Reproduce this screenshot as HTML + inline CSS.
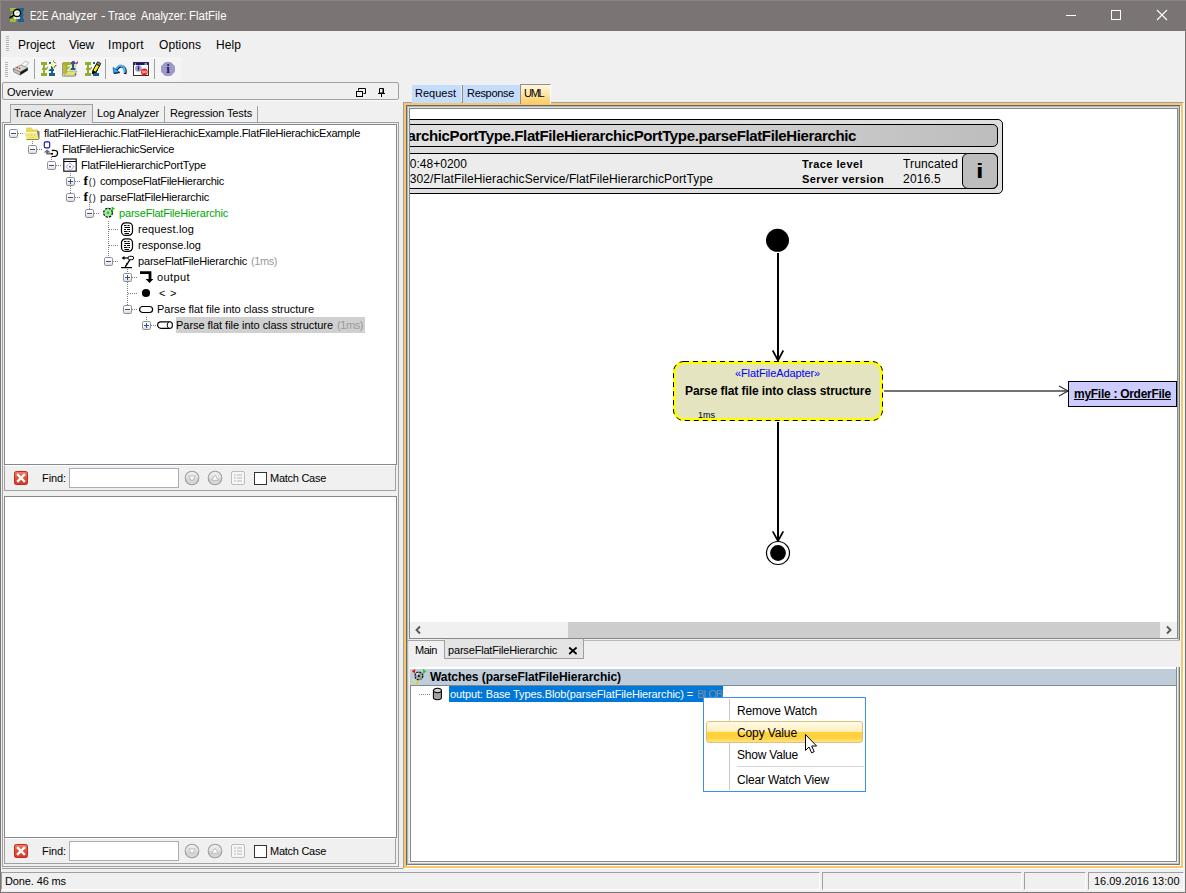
<!DOCTYPE html>
<html><head><meta charset="utf-8"><title>E2E Analyzer - Trace Analyzer: FlatFile</title><style>
*{margin:0;padding:0;box-sizing:border-box}
html,body{width:1186px;height:893px;overflow:hidden;background:#f0f0f0;font-family:"Liberation Sans",sans-serif;}
#root{position:relative;width:1186px;height:893px;overflow:hidden;background:#f0f0f0}
.b{position:absolute;display:block}
.t{position:absolute;white-space:pre;display:block}
</style></head><body><div id="root">
<div class="b" style="left:0px;top:0px;width:1186px;height:31px;background:#7a7574"></div>
<div class="b" style="left:0px;top:31px;width:1px;height:862px;background:#7a7574"></div>
<div class="b" style="left:1185px;top:31px;width:1px;height:862px;background:#7a7574"></div>
<div class="b" style="left:0px;top:892px;width:1186px;height:1px;background:#7a7574"></div>
<div class="b" style="left:0px;top:0px;width:1186px;height:1px;background:#8b8685"></div>
<div class="b" style="left:0px;top:0px;width:1px;height:31px;background:#8b8685"></div>
<svg class="b" style="left:9px;top:7px;" width="16" height="16" viewBox="0 0 16 16">
<rect x="1" y="1" width="6" height="3" fill="#9cc032"/><rect x="4" y="4" width="3" height="8" fill="#9cc032"/><rect x="1" y="12" width="6" height="3" fill="#9cc032"/><rect x="2" y="7" width="3" height="2" fill="#9cc032"/>
<rect x="9" y="1" width="6" height="3" fill="#1c6490"/><rect x="11" y="4" width="3" height="8" fill="#1c6490"/><rect x="9" y="12" width="6" height="3" fill="#1c6490"/><rect x="12" y="7" width="2.500" height="2" fill="#1c6490"/>
<rect x="5.200" y="10" width="5.600" height="1.800" fill="#fff"/>
<circle cx="8" cy="6" r="3.500" fill="#fff" stroke="#000" stroke-width="1.300"/>
<path d="M6.800 6.800 Q8.500 4.500 9.500 5.500" fill="none" stroke="#9cc032" stroke-width="1"/>
<path d="M5 8.200 L0.500 10.900" stroke="#000" stroke-width="1.400"/>
</svg>
<span class="t" style="left:30px;top:8px;font-size:12px;line-height:16px;color:#fff;transform:scaleX(0.8154);transform-origin:0 0;">E2E</span>
<span class="t" style="left:50.5px;top:8px;font-size:12px;line-height:16px;color:#fff;transform:scaleX(0.9853);transform-origin:0 0;">Analyzer</span>
<span class="t" style="left:100.5px;top:8px;font-size:12px;line-height:16px;color:#fff;transform:scaleX(1.1250);transform-origin:0 0;">-</span>
<span class="t" style="left:107.5px;top:8px;font-size:12px;line-height:16px;color:#fff;transform:scaleX(0.9261);transform-origin:0 0;">Trace</span>
<span class="t" style="left:140.5px;top:8px;font-size:12px;line-height:16px;color:#fff;transform:scaleX(0.9094);transform-origin:0 0;">Analyzer:</span>
<span class="t" style="left:189px;top:8px;font-size:12px;line-height:16px;color:#fff;transform:scaleX(0.9531);transform-origin:0 0;">FlatFile</span>
<svg class="b" style="left:1060px;top:5px;" width="115" height="22" viewBox="0 0 115 22">
<path d="M6 10.5h10" stroke="#fff" stroke-width="1"/>
<rect x="51.5" y="5.500" width="9" height="9" fill="none" stroke="#fff" stroke-width="1"/>
<path d="M97 5l10 10M107 5l-10 10" stroke="#fff" stroke-width="1.1"/>
</svg>
<div class="b" style="left:6px;top:36px;width:3px;height:1px;background:#b4b4b4"></div>
<div class="b" style="left:6px;top:38px;width:3px;height:1px;background:#b4b4b4"></div>
<div class="b" style="left:6px;top:40px;width:3px;height:1px;background:#b4b4b4"></div>
<div class="b" style="left:6px;top:42px;width:3px;height:1px;background:#b4b4b4"></div>
<div class="b" style="left:6px;top:44px;width:3px;height:1px;background:#b4b4b4"></div>
<div class="b" style="left:6px;top:46px;width:3px;height:1px;background:#b4b4b4"></div>
<div class="b" style="left:6px;top:48px;width:3px;height:1px;background:#b4b4b4"></div>
<div class="b" style="left:6px;top:50px;width:3px;height:1px;background:#b4b4b4"></div>
<span class="t" style="left:18px;top:37px;font-size:12px;line-height:16px;color:#000;letter-spacing:-0.051px;">Project</span>
<span class="t" style="left:69px;top:37px;font-size:12px;line-height:16px;color:#000;letter-spacing:-0.199px;">View</span>
<span class="t" style="left:108px;top:37px;font-size:12px;line-height:16px;color:#000;letter-spacing:0.331px;">Import</span>
<span class="t" style="left:159px;top:37px;font-size:12px;line-height:16px;color:#000;letter-spacing:0.092px;">Options</span>
<span class="t" style="left:216px;top:37px;font-size:12px;line-height:16px;color:#000;letter-spacing:0.078px;">Help</span>
<div class="b" style="left:1px;top:57px;width:180px;height:24px;background:#f5f5f5"></div>
<div class="b" style="left:5px;top:62px;width:3px;height:1px;background:#b4b4b4"></div>
<div class="b" style="left:5px;top:64px;width:3px;height:1px;background:#b4b4b4"></div>
<div class="b" style="left:5px;top:66px;width:3px;height:1px;background:#b4b4b4"></div>
<div class="b" style="left:5px;top:68px;width:3px;height:1px;background:#b4b4b4"></div>
<div class="b" style="left:5px;top:70px;width:3px;height:1px;background:#b4b4b4"></div>
<div class="b" style="left:5px;top:72px;width:3px;height:1px;background:#b4b4b4"></div>
<div class="b" style="left:5px;top:74px;width:3px;height:1px;background:#b4b4b4"></div>
<div class="b" style="left:5px;top:76px;width:3px;height:1px;background:#b4b4b4"></div>
<div class="b" style="left:34px;top:59px;width:1px;height:20px;background:#a0a0a0"></div>
<div class="b" style="left:105px;top:59px;width:1px;height:20px;background:#a0a0a0"></div>
<div class="b" style="left:154px;top:59px;width:1px;height:20px;background:#a0a0a0"></div>
<svg class="b" style="left:12px;top:60px;" width="18" height="17" viewBox="0 0 18 17">
<path d="M8.700 5.500 L13.300 1.300 L16.700 2.600 L13.300 6.600Z" fill="#fff" stroke="#9a9a9a" stroke-width=".7"/>
<path d="M1.100 8.900 L8.700 5.100 L15.800 7.650 L8.200 11.900Z" fill="#d6d6d6" stroke="#777" stroke-width=".6"/>
<path d="M1.100 8.900 L8.200 11.900 V15.200 L1.900 11.900Z" fill="#a8a8a8" stroke="#666" stroke-width=".6"/>
<path d="M8.200 11.900 L15.800 7.650 V10.600 L8.200 15.200Z" fill="#1a1a1a"/>
<path d="M2 10 L8 12.800 M2.300 11 L8 13.800" stroke="#e8e8e8" stroke-width=".5"/>
<rect x="4.600" y="7" width="1.400" height="1.200" fill="#f00"/><rect x="6.800" y="7.800" width="1.400" height="1.200" fill="#f00"/>
</svg>
<svg class="b" style="left:40px;top:60px;" width="17" height="17" viewBox="0 0 17 17"><g transform="translate(1,2)"><rect x="0" y="0" width="6" height="3" fill="#93ae2e"/><rect x="2" y="3" width="2" height="8" fill="#93ae2e"/><rect x="0" y="11" width="6" height="3" fill="#93ae2e"/><path d="M1 6 H5 L7 4.500 V6 L5.500 8 H1Z" fill="#93ae2e"/>
<rect x="8" y="11" width="6" height="3" fill="#1d5f86"/><rect x="10" y="4" width="2" height="7" fill="#1d5f86"/><path d="M7.300 9 L9 7 H13 V9Z" fill="#1d5f86"/><rect x="8" y="0" width="2" height="2" fill="#1d5f86"/></g><path d="M12.500 1.500 L13.300 3.700 L15.300 4.400 L13.300 5.200 L12.500 7.300 L11.700 5.200 L9.700 4.400 L11.700 3.700Z" fill="#ffff00" stroke="#fff" stroke-width=".5"/><path d="M13.300 1 L15.800 3.500 M16 5 Q15.500 7 13.700 7.300" fill="none" stroke="#000" stroke-width="1" stroke-dasharray="1.300 .6"/></svg>
<svg class="b" style="left:61px;top:60px;" width="18" height="18" viewBox="0 0 18 18">
<rect x="2" y="2" width="8.500" height="11" fill="#a6b030"/><rect x="2" y="5" width="2.500" height="9.500" fill="#c4bc24"/>
<path d="M1.500 3 V16.200 H14.500" fill="none" stroke="#9a9aa8" stroke-width="1"/>
<rect x="10" y="2" width="4.500" height="2" fill="#1d5f86"/><rect x="11" y="4" width="2" height="6" fill="#1d5f86"/><rect x="10" y="8" width="4.500" height="2" fill="#1d5f86"/><rect x="13.500" y="4.500" width="1" height="3" fill="#c4bc24"/><rect x="13.800" y="13" width="1.400" height="2.500" fill="#1d5f86"/>
<path d="M11 1.200 L13.500 0.800 V2.200 H11Z M14.500 3.600 L17 1 V3 L15.500 4.600Z" fill="#a020a0"/>
<text x="6" y="10.800" font-family="Liberation Sans, sans-serif" font-size="9" font-weight="bold" fill="#fff">2</text>
<path d="M3 15.700 L6.700 11 H16.100 L12.700 15.700Z" fill="#e4e464" stroke="#8e8e9c" stroke-width=".6"/>
</svg>
<svg class="b" style="left:84px;top:60px;" width="18" height="17" viewBox="0 0 18 17"><g transform="translate(1,2)"><rect x="0" y="0" width="6" height="3" fill="#93ae2e"/><rect x="2" y="3" width="2" height="8" fill="#93ae2e"/><rect x="0" y="11" width="6" height="3" fill="#93ae2e"/><path d="M1 6 H5 L7 4.500 V6 L5.500 8 H1Z" fill="#93ae2e"/>
<rect x="8" y="11" width="6" height="3" fill="#1d5f86"/><rect x="10" y="4" width="2" height="7" fill="#1d5f86"/><path d="M7.300 9 L9 7 H13 V9Z" fill="#1d5f86"/><rect x="8" y="0" width="2" height="2" fill="#1d5f86"/></g><path d="M8.300 13.600 L9 10.300 L12.400 4.200 L15.600 5.800 L12 12Z" fill="#f8f400" stroke="#000" stroke-width="1"/><path d="M12.400 4.200 L13.600 1.800 L16.800 3.400 L15.600 5.800Z" fill="#8a8a8a" stroke="#000" stroke-width=".8"/><path d="M8.300 13.800 L9 10.300 L12 12Z" fill="#000"/></svg>
<svg class="b" style="left:111px;top:61px;" width="17" height="16" viewBox="0 0 17 16">
<path d="M13.600 12.300 C15 7 11.500 3.800 8.500 4.700 C6.500 5.400 5.500 7 5 8.500" fill="none" stroke="#000" stroke-width="2.600" transform="translate(.5,.7)"/>
<path d="M13.400 12 C14.800 7 11.500 3.800 8.500 4.700 C6.500 5.400 5.500 7 5 8.500" fill="none" stroke="#48b4ff" stroke-width="2.200"/>
<path d="M2 6.300 L2.600 12.300 L9 11.300Z" fill="#000" transform="translate(.4,.6)"/>
<path d="M2 6.300 L2.600 12 L8.600 11Z" fill="#36a6ff" stroke="#0a3a9a" stroke-width=".5"/>
</svg>
<svg class="b" style="left:132px;top:61px;" width="18" height="17" viewBox="0 0 18 17">
<rect x="1.500" y="1.500" width="15" height="13" fill="#fff" stroke="#333" stroke-width="1"/>
<rect x="2" y="2" width="14" height="2" fill="#14148c"/><rect x="3" y="2.500" width="1" height="1" fill="#fff"/><rect x="12.500" y="2.500" width="2.500" height="1" fill="#fff"/>
<circle cx="6.400" cy="7.500" r="3.300" fill="#9a9cd0"/><rect x="5.900" y="5.800" width="1.200" height="3.600" fill="#2a2a5a"/><rect x="5.900" y="4.800" width="1.200" height=".8" fill="#2a2a5a"/>
<circle cx="12.300" cy="10.900" r="3.300" fill="#f01414"/><circle cx="11.200" cy="10.900" r="1.050" fill="none" stroke="#fff" stroke-width=".7"/><circle cx="13.400" cy="10.900" r="1.050" fill="none" stroke="#fff" stroke-width=".7"/>
</svg>
<svg class="b" style="left:161px;top:62px;" width="14" height="14" viewBox="0 0 14 14">
<path d="M4.200 0 H9.800 L14 4.200 V9.800 L9.800 14 H4.200 L0 9.800 V4.200Z" fill="#9c9acc"/>
<text x="7" y="11.300" text-anchor="middle" font-family="Liberation Serif, serif" font-weight="bold" font-size="13" fill="#22224e">i</text>
</svg>
<div class="b" style="left:1px;top:872px;width:819px;height:18px;border-top:1px solid #a0a0a0;border-left:1px solid #a0a0a0;border-right:1px solid #fff;border-bottom:1px solid #fff"></div>
<div class="b" style="left:822px;top:872px;width:200px;height:18px;border-top:1px solid #a0a0a0;border-left:1px solid #a0a0a0;border-right:1px solid #fff;border-bottom:1px solid #fff"></div>
<div class="b" style="left:1024px;top:872px;width:62px;height:18px;border-top:1px solid #a0a0a0;border-left:1px solid #a0a0a0;border-right:1px solid #fff;border-bottom:1px solid #fff"></div>
<div class="b" style="left:1088px;top:872px;width:96px;height:18px;border-top:1px solid #a0a0a0;border-left:1px solid #a0a0a0;border-right:1px solid #fff;border-bottom:1px solid #fff"></div>
<span class="t" style="left:5px;top:873px;font-size:11px;line-height:16px;color:#000;letter-spacing:-0.125px;">Done. 46 ms</span>
<span class="t" style="left:1094px;top:873px;font-size:11px;line-height:16px;color:#000;letter-spacing:-0.009px;">16.09.2016 13:00</span>
<div class="b" style="left:2px;top:82px;width:397px;height:18px;border:1px solid #a0a0a0;border-radius:2px"></div>
<div class="b" style="left:3px;top:100px;width:396px;height:1px;background:#fafafa"></div>
<span class="t" style="left:7px;top:85px;font-size:11px;line-height:15px;color:#000;letter-spacing:0.02px;">Overview</span>
<svg class="b" style="left:355px;top:87px;" width="12" height="11" viewBox="0 0 12 11"><path d="M3.500 3.500 V1.500 H10.500 V6.500 H8.500" fill="none" stroke="#000" stroke-width="1"/><rect x="1.500" y="4.500" width="6" height="5" fill="none" stroke="#000" stroke-width="1"/></svg>
<svg class="b" style="left:377px;top:87px;" width="10" height="11" viewBox="0 0 10 11"><path d="M2.500 1.500 H6.500 V6 H2.500Z M1 6.500 H8 M4.500 6.500 V10" fill="none" stroke="#000" stroke-width="1"/><path d="M6 1.500 V6" stroke="#000" stroke-width="1"/></svg>
<div class="b" style="left:2px;top:122px;width:397px;height:745px;border:1px solid #a0a0a0"></div>
<div class="b" style="left:10px;top:104px;width:83px;height:19px;background:#e6e6e6;border:1px solid #a0a0a0;border-bottom:none"></div>
<span class="t" style="left:14px;top:105px;font-size:11px;line-height:16px;color:#000;letter-spacing:-0.069px;">Trace Analyzer</span>
<span class="t" style="left:97px;top:105px;font-size:11px;line-height:16px;color:#000;letter-spacing:-0.134px;">Log Analyzer</span>
<div class="b" style="left:164px;top:106px;width:1px;height:16px;background:#a0a0a0"></div>
<span class="t" style="left:170px;top:105px;font-size:11px;line-height:16px;color:#000;letter-spacing:-0.136px;">Regression Tests</span>
<div class="b" style="left:257px;top:106px;width:1px;height:16px;background:#a0a0a0"></div>
<div class="b" style="left:4px;top:124px;width:393px;height:341px;background:#fff;border:1px solid #828790"></div>
<div class="b" style="left:4px;top:465px;width:392px;height:26px;background:#f0f0f0;border:1px solid #a0a0a0;border-top:1px solid #fff"></div>
<svg class="b" width="0" height="0" style="left:0;top:0"><defs><linearGradient id="eg" x1="0" y1="0" x2="0" y2="1"><stop offset="0" stop-color="#fff"/><stop offset=".55" stop-color="#f6f6f6"/><stop offset="1" stop-color="#d4d4d4"/></linearGradient><linearGradient id="cg" x1="0" y1="0" x2="0" y2="1"><stop offset="0" stop-color="#f2f2f2"/><stop offset=".5" stop-color="#e2e2e2"/><stop offset=".55" stop-color="#d2d2d2"/><stop offset="1" stop-color="#dcdcdc"/></linearGradient></defs></svg>
<div class="b" style="left:18px;top:133px;width:6px;height:1px;background-image:repeating-linear-gradient(90deg,#808080 0 1px,transparent 1px 2px)"></div>
<svg class="b" style="left:23px;top:125px;" width="17" height="16" viewBox="0 0 17 16"><path d="M3 13 V3.500 L4 2.500 H8.500 L10 4.500 H15 V13Z" fill="#e4d858"/><path d="M14 5.500 L16.500 6.500 V14 H14Z" fill="#6a7086"/><path d="M1.200 7 H14.200 L15.700 14.500 H3.500Z" fill="#f1e97c"/><path d="M2 7.500 H13.800" stroke="#fffef0" stroke-width="1"/><path d="M3.500 14.500 H15.700" stroke="#8f8a48" stroke-width="1"/><path d="M5 10.500h1M8 10.500h1M11 10.500h1M6.500 12.500h1M9.500 12.500h1" stroke="#d8cc50" stroke-width="1"/></svg>
<span class="t" style="left:44px;top:125px;font-size:11px;line-height:16px;color:#000;letter-spacing:-0.265px;">flatFileHierachic.FlatFileHierachicExample.FlatFileHierachicExample</span>
<svg class="b" style="left:9px;top:129px;" width="9" height="9" viewBox="0 0 9 9"><rect x="0.500" y="0.500" width="8" height="8" rx="1.200" fill="url(#eg)" stroke="#919191"/><path d="M2 4.500H7" stroke="#2b4f9a" stroke-width="1"/></svg>
<div class="b" style="left:37px;top:149px;width:6px;height:1px;background-image:repeating-linear-gradient(90deg,#808080 0 1px,transparent 1px 2px)"></div>
<svg class="b" style="left:42px;top:141px;" width="17" height="16" viewBox="0 0 17 16"><rect x="2.300" y="0.800" width="5.400" height="6" rx="1.200" fill="none" stroke="#1414b4" stroke-width="1.150"/><path d="M5.200 8.400 L1.800 11.400 H4.200 V13.500 H11 V11.900 H6.200 V11.400 H8.600Z" fill="#6a6a6a"/><path d="M9.800 9.500 Q16 8.500 15.500 12.500 Q15.500 16 10 15.500" fill="none" stroke="#000" stroke-width="1.300"/><circle cx="10" cy="12.700" r="1" fill="#000"/><path d="M9.500 15.500 V16" stroke="#666" stroke-width="1"/></svg>
<span class="t" style="left:62px;top:141px;font-size:11px;line-height:16px;color:#000;letter-spacing:-0.275px;">FlatFileHierachicService</span>
<svg class="b" style="left:28px;top:145px;" width="9" height="9" viewBox="0 0 9 9"><rect x="0.500" y="0.500" width="8" height="8" rx="1.200" fill="url(#eg)" stroke="#919191"/><path d="M2 4.500H7" stroke="#2b4f9a" stroke-width="1"/></svg>
<div class="b" style="left:56px;top:165px;width:6px;height:1px;background-image:repeating-linear-gradient(90deg,#808080 0 1px,transparent 1px 2px)"></div>
<svg class="b" style="left:61px;top:157px;" width="17" height="16" viewBox="0 0 17 16"><rect x="2.800" y="2" width="12.400" height="12.200" fill="#fff" stroke="#000" stroke-width="1.100"/><path d="M2.800 4.500 H15.200" stroke="#000" stroke-width="1"/><path d="M9 5.800 L13 9.800 L9 13.400 L5 9.800Z" fill="none" stroke="#4a4aff" stroke-width=".8" stroke-dasharray="1.500 .7"/><circle cx="9" cy="9.700" r=".9" fill="#555522"/></svg>
<span class="t" style="left:81px;top:157px;font-size:11px;line-height:16px;color:#000;letter-spacing:-0.177px;">FlatFileHierarchicPortType</span>
<svg class="b" style="left:47px;top:161px;" width="9" height="9" viewBox="0 0 9 9"><rect x="0.500" y="0.500" width="8" height="8" rx="1.200" fill="url(#eg)" stroke="#919191"/><path d="M2 4.500H7" stroke="#2b4f9a" stroke-width="1"/></svg>
<div class="b" style="left:75px;top:181px;width:6px;height:1px;background-image:repeating-linear-gradient(90deg,#808080 0 1px,transparent 1px 2px)"></div>
<svg class="b" style="left:80px;top:173px;" width="17" height="16" viewBox="0 0 17 16"><text x="3.500" y="12" font-family="Liberation Serif, serif" font-weight="bold" font-size="13.500" fill="#000">f</text><text x="8.800" y="11.800" font-family="Liberation Sans, sans-serif" font-size="9" letter-spacing="1" fill="#000">()</text></svg>
<span class="t" style="left:100px;top:173px;font-size:11px;line-height:16px;color:#000;letter-spacing:-0.249px;">composeFlatFileHierarchic</span>
<svg class="b" style="left:66px;top:177px;" width="9" height="9" viewBox="0 0 9 9"><rect x="0.500" y="0.500" width="8" height="8" rx="1.200" fill="url(#eg)" stroke="#919191"/><path d="M2 4.500H7" stroke="#2b4f9a" stroke-width="1"/><path d="M4.500 2V7" stroke="#2b4f9a" stroke-width="1"/></svg>
<div class="b" style="left:75px;top:197px;width:6px;height:1px;background-image:repeating-linear-gradient(90deg,#808080 0 1px,transparent 1px 2px)"></div>
<svg class="b" style="left:80px;top:189px;" width="17" height="16" viewBox="0 0 17 16"><text x="3.500" y="12" font-family="Liberation Serif, serif" font-weight="bold" font-size="13.500" fill="#000">f</text><text x="8.800" y="11.800" font-family="Liberation Sans, sans-serif" font-size="9" letter-spacing="1" fill="#000">()</text></svg>
<span class="t" style="left:100px;top:189px;font-size:11px;line-height:16px;color:#000;letter-spacing:-0.178px;">parseFlatFileHierarchic</span>
<svg class="b" style="left:66px;top:193px;" width="9" height="9" viewBox="0 0 9 9"><rect x="0.500" y="0.500" width="8" height="8" rx="1.200" fill="url(#eg)" stroke="#919191"/><path d="M2 4.500H7" stroke="#2b4f9a" stroke-width="1"/></svg>
<div class="b" style="left:94px;top:213px;width:6px;height:1px;background-image:repeating-linear-gradient(90deg,#808080 0 1px,transparent 1px 2px)"></div>
<svg class="b" style="left:99px;top:205px;" width="17" height="16" viewBox="0 0 17 16"><circle cx="9" cy="7.800" r="4.400" fill="#a8eaa8" stroke="#000" stroke-width="1.200" stroke-dasharray="2.300 1.150"/><circle cx="9" cy="7.800" r="1.300" fill="#00d400"/><path d="M12.600 1.400 L16 3.600 L12.600 5.800Z" fill="#00d800"/></svg>
<span class="t" style="left:119px;top:205px;font-size:11px;line-height:16px;color:#00a800;letter-spacing:-0.178px;">parseFlatFileHierarchic</span>
<svg class="b" style="left:85px;top:209px;" width="9" height="9" viewBox="0 0 9 9"><rect x="0.500" y="0.500" width="8" height="8" rx="1.200" fill="url(#eg)" stroke="#919191"/><path d="M2 4.500H7" stroke="#2b4f9a" stroke-width="1"/></svg>
<div class="b" style="left:109px;top:229px;width:10px;height:1px;background-image:repeating-linear-gradient(90deg,#808080 0 1px,transparent 1px 2px)"></div>
<svg class="b" style="left:118px;top:221px;" width="17" height="16" viewBox="0 0 17 16"><rect x="3.500" y="1.800" width="11" height="12.600" rx="4" fill="#fff" stroke="#000" stroke-width="1.200"/><path d="M6 4.500H8.500M9.500 4.500H11.500M6.500 6.500H12M6 8.500H8M9 8.500H12M6 10.500H9.500M10.500 10.500H12M6.500 12.500H11" stroke="#000" stroke-width="1"/></svg>
<span class="t" style="left:138px;top:221px;font-size:11px;line-height:16px;color:#000;letter-spacing:0.142px;">request.log</span>
<div class="b" style="left:109px;top:245px;width:10px;height:1px;background-image:repeating-linear-gradient(90deg,#808080 0 1px,transparent 1px 2px)"></div>
<svg class="b" style="left:118px;top:237px;" width="17" height="16" viewBox="0 0 17 16"><rect x="3.500" y="1.800" width="11" height="12.600" rx="4" fill="#fff" stroke="#000" stroke-width="1.200"/><path d="M6 4.500H8.500M9.500 4.500H11.500M6.500 6.500H12M6 8.500H8M9 8.500H12M6 10.500H9.500M10.500 10.500H12M6.500 12.500H11" stroke="#000" stroke-width="1"/></svg>
<span class="t" style="left:138px;top:237px;font-size:11px;line-height:16px;color:#000;letter-spacing:0.0px;">response.log</span>
<div class="b" style="left:113px;top:261px;width:6px;height:1px;background-image:repeating-linear-gradient(90deg,#808080 0 1px,transparent 1px 2px)"></div>
<svg class="b" style="left:118px;top:253px;" width="17" height="16" viewBox="0 0 17 16"><path d="M3.500 5 L6.500 3 V7Z" fill="#000"/><path d="M5 5 H10.500" stroke="#000" stroke-width="1.200"/><rect x="10" y="3.300" width="5.600" height="3.400" rx="1.700" fill="#fff" stroke="#000" stroke-width="1"/><path d="M11.800 6.800 L7.300 13.800" stroke="#000" stroke-width="1.300"/><path d="M9.300 10 L8 11 L9 11.200 L7.500 13" fill="none" stroke="#000" stroke-width=".8"/><path d="M3 14.600 H14" stroke="#000" stroke-width="1.200"/></svg>
<span class="t" style="left:138px;top:253px;font-size:11px;line-height:16px;color:#000;letter-spacing:-0.178px;">parseFlatFileHierarchic</span>
<span class="t" style="left:251px;top:253px;font-size:11px;line-height:16px;color:#999;letter-spacing:-0.422px;">(1ms)</span>
<svg class="b" style="left:104px;top:257px;" width="9" height="9" viewBox="0 0 9 9"><rect x="0.500" y="0.500" width="8" height="8" rx="1.200" fill="url(#eg)" stroke="#919191"/><path d="M2 4.500H7" stroke="#2b4f9a" stroke-width="1"/></svg>
<div class="b" style="left:132px;top:277px;width:6px;height:1px;background-image:repeating-linear-gradient(90deg,#808080 0 1px,transparent 1px 2px)"></div>
<svg class="b" style="left:137px;top:269px;" width="17" height="16" viewBox="0 0 17 16"><path d="M3 3.600 H13 V10.500" fill="none" stroke="#000" stroke-width="2.800"/><path d="M8.600 10 H16.400 L12.500 14Z" fill="#000"/></svg>
<span class="t" style="left:157px;top:269px;font-size:11px;line-height:16px;color:#000;letter-spacing:0.401px;">output</span>
<svg class="b" style="left:123px;top:273px;" width="9" height="9" viewBox="0 0 9 9"><rect x="0.500" y="0.500" width="8" height="8" rx="1.200" fill="url(#eg)" stroke="#919191"/><path d="M2 4.500H7" stroke="#2b4f9a" stroke-width="1"/><path d="M4.500 2V7" stroke="#2b4f9a" stroke-width="1"/></svg>
<div class="b" style="left:128px;top:293px;width:10px;height:1px;background-image:repeating-linear-gradient(90deg,#808080 0 1px,transparent 1px 2px)"></div>
<svg class="b" style="left:137px;top:285px;" width="17" height="16" viewBox="0 0 17 16"><circle cx="9" cy="8" r="4.100" fill="#000"/></svg>
<span class="t" style="left:159px;top:285px;font-size:11px;line-height:16px;color:#000;letter-spacing:0.698px;">&lt; &gt;</span>
<div class="b" style="left:132px;top:309px;width:6px;height:1px;background-image:repeating-linear-gradient(90deg,#808080 0 1px,transparent 1px 2px)"></div>
<svg class="b" style="left:137px;top:301px;" width="17" height="16" viewBox="0 0 17 16"><rect x="2.600" y="5.500" width="13" height="6" rx="3" fill="#fff" stroke="#000" stroke-width="1.200"/></svg>
<span class="t" style="left:157px;top:301px;font-size:11px;line-height:16px;color:#000;letter-spacing:-0.037px;">Parse flat file into class structure</span>
<svg class="b" style="left:123px;top:305px;" width="9" height="9" viewBox="0 0 9 9"><rect x="0.500" y="0.500" width="8" height="8" rx="1.200" fill="url(#eg)" stroke="#919191"/><path d="M2 4.500H7" stroke="#2b4f9a" stroke-width="1"/></svg>
<div class="b" style="left:151px;top:325px;width:6px;height:1px;background-image:repeating-linear-gradient(90deg,#808080 0 1px,transparent 1px 2px)"></div>
<svg class="b" style="left:156px;top:317px;" width="17" height="16" viewBox="0 0 17 16"><rect x="1.600" y="4.800" width="14.800" height="6.600" rx="3.300" fill="#fff" stroke="#000" stroke-width="1.200"/><ellipse cx="13.800" cy="8.100" rx="2.600" ry="3.300" fill="#fff" stroke="#000" stroke-width="1"/></svg>
<div class="b" style="left:176px;top:317px;width:189px;height:16px;background:#d0d0d0"></div>
<span class="t" style="left:176px;top:317px;font-size:11px;line-height:16px;color:#000;letter-spacing:-0.037px;">Parse flat file into class structure</span>
<span class="t" style="left:337px;top:317px;font-size:11px;line-height:16px;color:#999;letter-spacing:-0.422px;">(1ms)</span>
<svg class="b" style="left:142px;top:321px;" width="9" height="9" viewBox="0 0 9 9"><rect x="0.500" y="0.500" width="8" height="8" rx="1.200" fill="url(#eg)" stroke="#919191"/><path d="M2 4.500H7" stroke="#2b4f9a" stroke-width="1"/><path d="M4.500 2V7" stroke="#2b4f9a" stroke-width="1"/></svg>
<div class="b" style="left:32px;top:141px;width:1px;height:5px;background-image:repeating-linear-gradient(180deg,#808080 0 1px,transparent 1px 2px)"></div>
<div class="b" style="left:51px;top:157px;width:1px;height:5px;background-image:repeating-linear-gradient(180deg,#808080 0 1px,transparent 1px 2px)"></div>
<div class="b" style="left:70px;top:173px;width:1px;height:5px;background-image:repeating-linear-gradient(180deg,#808080 0 1px,transparent 1px 2px)"></div>
<div class="b" style="left:70px;top:186px;width:1px;height:8px;background-image:repeating-linear-gradient(180deg,#808080 0 1px,transparent 1px 2px)"></div>
<div class="b" style="left:89px;top:202px;width:1px;height:8px;background-image:repeating-linear-gradient(180deg,#808080 0 1px,transparent 1px 2px)"></div>
<div class="b" style="left:108px;top:221px;width:1px;height:37px;background-image:repeating-linear-gradient(180deg,#808080 0 1px,transparent 1px 2px)"></div>
<div class="b" style="left:127px;top:269px;width:1px;height:5px;background-image:repeating-linear-gradient(180deg,#808080 0 1px,transparent 1px 2px)"></div>
<div class="b" style="left:127px;top:282px;width:1px;height:24px;background-image:repeating-linear-gradient(180deg,#808080 0 1px,transparent 1px 2px)"></div>
<div class="b" style="left:146px;top:317px;width:1px;height:5px;background-image:repeating-linear-gradient(180deg,#808080 0 1px,transparent 1px 2px)"></div>
<svg class="b" style="left:14px;top:471px;" width="14" height="14" viewBox="0 0 14 14"><defs><linearGradient id="rg466" x1="0" y1="0" x2="0" y2="1"><stop offset="0" stop-color="#ee8068"/><stop offset=".5" stop-color="#e2503c"/><stop offset="1" stop-color="#d23a28"/></linearGradient></defs><rect x="0.500" y="0.500" width="13" height="13" rx="1.800" fill="url(#rg466)" stroke="#c42a18" stroke-width="1"/><path d="M4 4 L10 10 M10 4 L4 10" stroke="#fff" stroke-width="2.400" stroke-linecap="square"/></svg>
<span class="t" style="left:42px;top:470px;font-size:11px;line-height:16px;color:#000;letter-spacing:-0.094px;">Find:</span>
<div class="b" style="left:69px;top:468px;width:110px;height:20px;background:#fff;border:1px solid #abadb3"></div>
<svg class="b" style="left:184px;top:470px;" width="16" height="16" viewBox="0 0 16 16"><circle cx="8" cy="8" r="6.800" fill="url(#cg)" stroke="#9c9c9c" stroke-width="1.100"/><path d="M4.600 6 H11.400 L8 11Z" fill="#fdfdfd" stroke="#b0b0b0" stroke-width=".8"/></svg>
<svg class="b" style="left:207px;top:470px;" width="16" height="16" viewBox="0 0 16 16"><circle cx="8" cy="8" r="6.800" fill="url(#cg)" stroke="#9c9c9c" stroke-width="1.100"/><path d="M4.600 10.300 H11.400 L8 5.300Z" fill="#fdfdfd" stroke="#b0b0b0" stroke-width=".8"/></svg>
<svg class="b" style="left:231px;top:470px;" width="15" height="16" viewBox="0 0 15 16"><rect x="0.500" y="1.500" width="13" height="13" rx="1.500" fill="#f6f6f6" stroke="#bdbdbd"/><path d="M3 5H5M6 5H11M3 8H5M6 8H11M3 11H5M6 11H11" stroke="#b8b8b8" stroke-width="1"/></svg>
<div class="b" style="left:254px;top:472px;width:13px;height:13px;background:#fff;border:1px solid #333"></div>
<span class="t" style="left:270px;top:470px;font-size:11px;line-height:16px;color:#000;letter-spacing:-0.27px;">Match Case</span>
<div class="b" style="left:4px;top:496px;width:393px;height:342px;background:#fff;border:1px solid #828790"></div>
<div class="b" style="left:4px;top:838px;width:392px;height:26px;background:#f0f0f0;border:1px solid #a0a0a0;border-top:1px solid #fff"></div>
<svg class="b" style="left:14px;top:844px;" width="14" height="14" viewBox="0 0 14 14"><defs><linearGradient id="rg839" x1="0" y1="0" x2="0" y2="1"><stop offset="0" stop-color="#ee8068"/><stop offset=".5" stop-color="#e2503c"/><stop offset="1" stop-color="#d23a28"/></linearGradient></defs><rect x="0.500" y="0.500" width="13" height="13" rx="1.800" fill="url(#rg839)" stroke="#c42a18" stroke-width="1"/><path d="M4 4 L10 10 M10 4 L4 10" stroke="#fff" stroke-width="2.400" stroke-linecap="square"/></svg>
<span class="t" style="left:42px;top:843px;font-size:11px;line-height:16px;color:#000;letter-spacing:-0.094px;">Find:</span>
<div class="b" style="left:69px;top:841px;width:110px;height:20px;background:#fff;border:1px solid #abadb3"></div>
<svg class="b" style="left:184px;top:843px;" width="16" height="16" viewBox="0 0 16 16"><circle cx="8" cy="8" r="6.800" fill="url(#cg)" stroke="#9c9c9c" stroke-width="1.100"/><path d="M4.600 6 H11.400 L8 11Z" fill="#fdfdfd" stroke="#b0b0b0" stroke-width=".8"/></svg>
<svg class="b" style="left:207px;top:843px;" width="16" height="16" viewBox="0 0 16 16"><circle cx="8" cy="8" r="6.800" fill="url(#cg)" stroke="#9c9c9c" stroke-width="1.100"/><path d="M4.600 10.300 H11.400 L8 5.300Z" fill="#fdfdfd" stroke="#b0b0b0" stroke-width=".8"/></svg>
<svg class="b" style="left:231px;top:843px;" width="15" height="16" viewBox="0 0 15 16"><rect x="0.500" y="1.500" width="13" height="13" rx="1.500" fill="#f6f6f6" stroke="#bdbdbd"/><path d="M3 5H5M6 5H11M3 8H5M6 8H11M3 11H5M6 11H11" stroke="#b8b8b8" stroke-width="1"/></svg>
<div class="b" style="left:254px;top:845px;width:13px;height:13px;background:#fff;border:1px solid #333"></div>
<span class="t" style="left:270px;top:843px;font-size:11px;line-height:16px;color:#000;letter-spacing:-0.27px;">Match Case</span>
<div class="b" style="left:2px;top:868px;width:1182px;height:1px;background:#a0a0a0"></div>
<div class="b" style="left:403px;top:102px;width:781px;height:767px;border-left:1px solid #a0a0a0;border-top:1px solid #a0a0a0;border-right:1px solid #fff;border-bottom:1px solid #fff"></div>
<div class="b" style="left:404px;top:103px;width:779px;height:765px;border:2px solid #f8c767"></div>
<div class="b" style="left:406px;top:105px;width:775px;height:761px;border-left:1px solid #696969;border-top:1px solid #696969;border-right:1px solid #fff;border-bottom:1px solid #fff;background:#f0f0f0"></div>
<div class="b" style="left:407px;top:106px;width:773px;height:759px;border-left:1px solid #b4b4b4;border-top:1px solid #b4b4b4;border-right:1px solid #787878;border-bottom:1px solid #787878"></div>
<div class="b" style="left:408px;top:107px;width:771px;height:757px;border-left:1px solid #e3e3e3;border-top:1px solid #e3e3e3;border-right:1px solid #c4c4c4;border-bottom:1px solid #c4c4c4"></div>
<div class="b" style="left:412px;top:85px;width:49px;height:18px;background:#c4ddfd"></div>
<span class="t" style="left:415px;top:85px;font-size:11px;line-height:16px;color:#000;letter-spacing:0.002px;">Request</span>
<div class="b" style="left:462px;top:85px;width:1px;height:17px;background:#8a8a8a"></div>
<div class="b" style="left:463px;top:85px;width:57px;height:18px;background:#c4ddfd"></div>
<span class="t" style="left:467px;top:85px;font-size:11px;line-height:16px;color:#000;letter-spacing:-0.318px;">Response</span>
<div class="b" style="left:520px;top:84px;width:31px;height:20px;background:linear-gradient(180deg,#fff6dc 0%,#ffe9b4 40%,#ffd67e 75%,#ffcb62 100%);border-left:1px solid #909090;border-top:1px solid #909090;border-right:1px solid #fff"></div>
<span class="t" style="left:524px;top:85px;font-size:11px;line-height:16px;color:#000;letter-spacing:-1.245px;">UML</span>
<div class="b" style="left:409px;top:108px;width:769px;height:531px;border:1px solid #828790;background:#fff"></div>
<div class="b" style="left:410px;top:622px;width:767px;height:16px;background:#f0f0f0"></div>
<div class="b" style="left:568px;top:622px;width:592px;height:16px;background:#cdcdcd"></div>
<svg class="b" style="left:414px;top:625px;" width="8" height="10" viewBox="0 0 8 10"><path d="M6 1.500 L2.500 5 L6 8.500" fill="none" stroke="#555" stroke-width="1.800"/></svg>
<svg class="b" style="left:1165px;top:625px;" width="8" height="10" viewBox="0 0 8 10"><path d="M2 1.500 L5.500 5 L2 8.500" fill="none" stroke="#555" stroke-width="1.800"/></svg>
<div class="b" style="left:410px;top:109px;width:767px;height:513px;overflow:hidden">
<div class="b" style="left:-30px;top:10px;width:623px;height:75px;border:1px solid #000;border-radius:5px;background:#dedede"></div>
<div class="b" style="left:-30px;top:15px;width:618px;height:23px;border:1px solid #000;border-radius:5px;background:linear-gradient(90deg,#e2e2e2 0%,#dcdcdc 30%,#bdbdbd 100%)"></div>
<div class="b" style="left:-30px;top:44px;width:618px;height:36px;border:1px solid #000;border-radius:5px;background:#ececec"></div>
<div class="b" style="left:552px;top:44px;width:36px;height:36px;border:1px solid #000;border-radius:6px;background:#bdbdbd"></div>
<span class="t" style="left:-8px;top:17px;font-size:15px;line-height:20px;color:#000;font-weight:bold;letter-spacing:-0.363px;">rarchicPortType.FlatFileHierarchicPortType.parseFlatFileHierarchic</span>
<span class="t" style="left:-7px;top:48px;font-size:12px;line-height:15px;color:#000;letter-spacing:0.027px;">10:48+0200</span>
<span class="t" style="left:-7px;top:63px;font-size:12px;line-height:15px;color:#000;letter-spacing:0.105px;">8302/FlatFileHierachicService/FlatFileHierarchicPortType</span>
<span class="t" style="left:392px;top:48px;font-size:11px;line-height:15px;color:#000;font-weight:bold;letter-spacing:0.429px;">Trace level</span>
<span class="t" style="left:392px;top:63px;font-size:11px;line-height:15px;color:#000;font-weight:bold;letter-spacing:0.397px;">Server version</span>
<span class="t" style="left:493px;top:48px;font-size:12px;line-height:15px;color:#000;letter-spacing:0.156px;">Truncated</span>
<span class="t" style="left:493px;top:63px;font-size:12px;line-height:15px;color:#000;letter-spacing:0.216px;">2016.5</span>
<span class="t" style="left:566.2px;top:50px;font-size:21px;line-height:24px;color:#000;font-weight:bold;transform:scaleX(1.2834);transform-origin:0 0;">i</span>
<svg class="b" style="left:0;top:0" width="767" height="513" viewBox="410 109 767 513">
<circle cx="777.5" cy="240.3" r="11.500" fill="#000"/>
<path d="M778 253 V360" stroke="#000" stroke-width="2"/>
<path d="M772.700 350.500 L778 360.500 L783.300 350.500" fill="none" stroke="#000" stroke-width="1.700"/>
<rect x="674.500" y="362.500" width="207" height="57" rx="9.500" fill="#e4e4c0" stroke="#ffff00" stroke-width="3"/>
<rect x="673.500" y="361.500" width="209" height="59" rx="10.500" fill="none" stroke="#000" stroke-width="1" stroke-dasharray="5 4"/>
<path d="M778 422 V540" stroke="#000" stroke-width="2"/>
<path d="M772.700 531.300 L778 541 L783.300 531.300" fill="none" stroke="#000" stroke-width="1.700"/>
<circle cx="778" cy="553" r="11.500" fill="#fff" stroke="#000" stroke-width="1.200"/>
<circle cx="778" cy="553" r="7.900" fill="#000"/>
<path d="M884 391 H1068" stroke="#444" stroke-width="1.300"/>
<path d="M1059 386 L1068 391 L1059 396" fill="none" stroke="#333" stroke-width="1.200"/>
<rect x="1068.500" y="381.500" width="108" height="25" fill="#ccccff" stroke="#000" stroke-width="1"/>
</svg>
<span class="t" style="left:325px;top:256px;font-size:11px;line-height:16px;color:#0000ff;letter-spacing:-0.108px;">«FlatFileAdapter»</span>
<span class="t" style="left:275px;top:274px;font-size:12px;line-height:17px;color:#000;font-weight:bold;letter-spacing:-0.076px;">Parse flat file into class structure</span>
<span class="t" style="left:288px;top:300px;font-size:9px;line-height:12px;color:#000;letter-spacing:-0.005px;">1ms</span>
<span class="t" style="left:664px;top:277px;font-size:12px;line-height:16px;color:#000;font-weight:bold;letter-spacing:-0.28px;text-decoration:underline;">myFile : OrderFile</span>
</div>
<div class="b" style="left:407px;top:640px;width:38px;height:1px;background:#a4a4a4"></div>
<div class="b" style="left:584px;top:640px;width:596px;height:1px;background:#b8b8b8"></div>
<div class="b" style="left:1177px;top:641px;width:4px;height:26px;background:#f0f0f0"></div>
<div class="b" style="left:445px;top:639px;width:139px;height:20px;background:#e4e4e4;border-bottom:1px solid #a0a0a0;border-right:1px solid #a0a0a0"></div>
<div class="b" style="left:410px;top:638px;width:767px;height:1px;background:#828790"></div>
<div class="b" style="left:444px;top:640px;width:1px;height:19px;background:#a0a0a0"></div>
<span class="t" style="left:415px;top:642px;font-size:11px;line-height:16px;color:#000;letter-spacing:-0.461px;">Main</span>
<span class="t" style="left:448px;top:642px;font-size:11px;line-height:16px;color:#000;letter-spacing:-0.178px;">parseFlatFileHierarchic</span>
<svg class="b" style="left:568px;top:646px;" width="11" height="10" viewBox="0 0 11 10"><path d="M1.200 1.500 L8.600 8 M8.600 1.500 L1.200 8" stroke="#000" stroke-width="1.700"/></svg>
<div class="b" style="left:410px;top:667px;width:767px;height:195px;background:#fff"></div>
<div class="b" style="left:410px;top:669px;width:767px;height:17px;background:#bfcddb;border-bottom:1px solid #7a8896"></div>
<svg class="b" style="left:411px;top:669px;" width="17" height="16" viewBox="0 0 17 16">
<circle cx="7.900" cy="6.900" r="3.900" fill="#a4a4a4" stroke="#111" stroke-width="1.300" stroke-dasharray="2 1.060"/><path d="M5.500 5.500 L7 4.300" stroke="#fff" stroke-width="1.200"/><circle cx="7.900" cy="6.900" r="1" fill="#000"/>
<path d="M0.800 2.200 L4.100 0 L4.100 4.400Z" fill="#e81010"/><path d="M15.200 2.400 L12 0 L12 4.900Z" fill="#10d010"/>
<path d="M4 9 L1 11 M11 9.500 L7.500 12.500 M3.500 11.500 L5.500 9.500" stroke="#aee6e6" stroke-width=".9"/>
<rect x="0" y="11.200" width="2.900" height="2.900" fill="#ffc020" stroke="#bfeeee" stroke-width=".5"/><rect x="4.900" y="12.200" width="3" height="3" fill="#ffb810" stroke="#bfeeee" stroke-width=".5"/>
</svg>
<span class="t" style="left:430px;top:669px;font-size:12px;line-height:16px;color:#000;font-weight:bold;letter-spacing:-0.06px;">Watches (parseFlatFileHierarchic)</span>
<div class="b" style="left:419px;top:694px;width:12px;height:1px;background-image:repeating-linear-gradient(90deg,#808080 0 1px,transparent 1px 2px)"></div>
<svg class="b" style="left:432px;top:687px;" width="11" height="15" viewBox="0 0 11 15"><path d="M1.400 3.500 V10.800 C1.400 13.400 9.400 13.400 9.400 10.800 V3.500" fill="#a2a2a2" stroke="#000" stroke-width="1.050"/><ellipse cx="5.400" cy="3.500" rx="4" ry="2.200" fill="#cfcfcf" stroke="#000" stroke-width="1.050"/></svg>
<div class="b" style="left:449px;top:686px;width:274px;height:16px;background:#0078d7"></div>
<span class="t" style="left:450px;top:686px;font-size:11px;line-height:16px;color:#fff;letter-spacing:-0.119px;">output: Base Types.Blob(parseFlatFileHierarchic) =</span>
<span class="t" style="left:697px;top:686px;font-size:11px;line-height:16px;color:#7f8fa0;letter-spacing:-1.09px;">BLOB</span>
<div class="b" style="left:1176px;top:667px;width:1px;height:195px;background:#828790"></div>
<div class="b" style="left:410px;top:861px;width:767px;height:1px;background:#828790"></div>
<div class="b" style="left:410px;top:685px;width:1px;height:177px;background:#828790"></div>
<div class="b" style="left:703px;top:697px;width:163px;height:95px;background:#fff;border:1px solid #3c90e6;"></div>
<div class="b" style="left:729px;top:699px;width:1px;height:91px;background:#c8c8c8"></div>
<div class="b" style="left:730px;top:699px;width:1px;height:91px;background:#fff"></div>
<div class="b" style="left:737px;top:766px;width:127px;height:1px;background:#d4d4d4"></div>
<div class="b" style="left:706px;top:721px;width:157px;height:22px;border:1px solid #dcc27a;border-radius:3px;background:linear-gradient(180deg,#fffbea 0%,#ffeeb8 48%,#ffd23c 50%,#ffd23c 80%,#ffe38a 100%)"></div>
<span class="t" style="left:737px;top:703px;font-size:12px;line-height:16px;color:#000;letter-spacing:-0.133px;">Remove Watch</span>
<span class="t" style="left:737px;top:725px;font-size:12px;line-height:16px;color:#000;letter-spacing:-0.116px;">Copy Value</span>
<span class="t" style="left:737px;top:747px;font-size:12px;line-height:16px;color:#000;letter-spacing:-0.216px;">Show Value</span>
<span class="t" style="left:737px;top:772px;font-size:12px;line-height:16px;color:#000;letter-spacing:-0.169px;">Clear Watch View</span>
<svg class="b" style="left:804px;top:733px;" width="14" height="21" viewBox="0 0 14 21"><path d="M1.500 1.500 V17.400 L5 14 L7.600 19.800 L10.200 18.700 L7.700 13 H12.600Z" fill="#fff" stroke="#000" stroke-width="1"/></svg>
</div></body></html>
